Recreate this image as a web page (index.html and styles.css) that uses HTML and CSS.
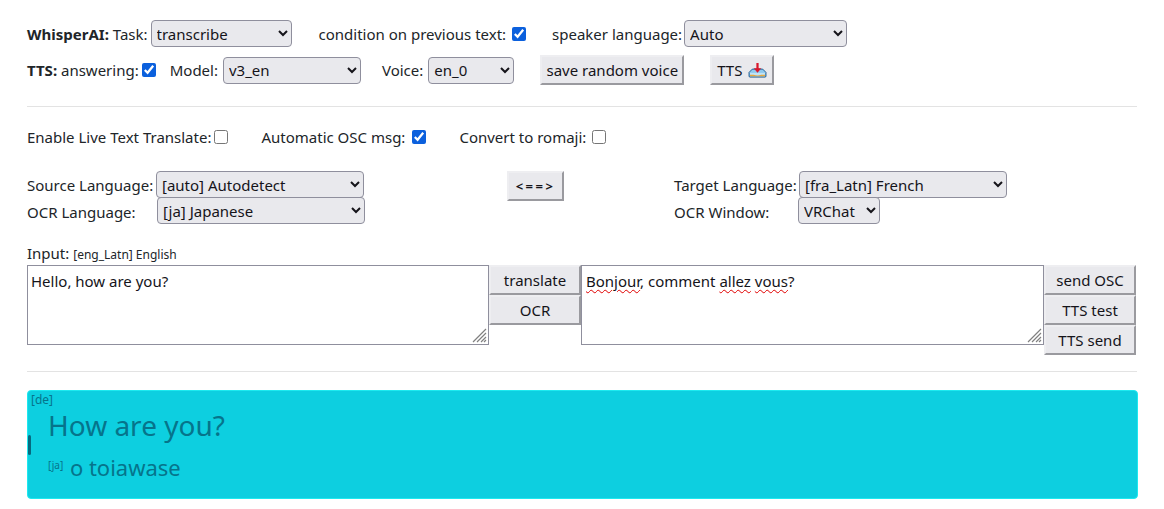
FILE: index.html
```html
<!doctype html>
<html lang="en">

<head>
	<meta charset="UTF-8">
	<title>Whispering Tiger</title>
	<link rel="stylesheet" href="styles.css">
</head>

<body>
	<div class="row row-whisper">
		<span class="field gap-3"><span><b>WhisperAI:</b> Task:</span>
			<select class="sel-task"><option>transcribe</option></select></span>
		<label class="field gap-6">condition on previous text: <input type="checkbox" checked></label>
		<span class="field gap-2">speaker language:
			<select class="sel-speaker"><option>Auto</option></select></span>
	</div>
	<div class="row row-tts">
		<label class="field gap-3"><span><b>TTS:</b> answering:</span> <input type="checkbox" checked></label>
		<span class="field gap-5 pull-model">Model:
			<select class="sel-model"><option>v3_en</option></select></span>
		<span class="field gap-5 pull-voice">Voice:
			<select class="sel-voice"><option>en_0</option></select></span>
		<button class="btn btn-save">save random voice</button>
		<button class="btn btn-tts">TTS
			<svg width="19" height="15" viewBox="0 0 20 16">
				<path d="M1 10 L4.5 6.5 H15.5 L19 10 V14 Q19 15 18 15 H2 Q1 15 1 14 Z" fill="#8fc9ee" stroke="#15548c"/>
				<path d="M2 10.5 H18 V14 H2 Z" fill="#bfe3f7"/>
				<path d="M2 12.5 H6 Q10 14 14 12.5 H18 V14.2 H2 Z" fill="#e8a83e"/>
				<path d="M8.8 0 H11.2 V5.5 H14 L10 10.5 L6 5.5 H8.8 Z" fill="#d9182d"/>
			</svg>
		</button>
	</div>
	<hr class="rule rule-top">

	<div class="row row-options">
		<label class="field gap-3">Enable Live Text Translate: <input type="checkbox"></label>
		<label class="field gap-7">Automatic OSC msg: <input type="checkbox" checked></label>
		<label class="field gap-6">Convert to romaji: <input type="checkbox"></label>
	</div>

	<div class="lang-grid">
		<div>
			<div class="lang-row"><span class="lang-label">Source Language:</span>
				<select class="sel-lang"><option>[auto] Autodetect</option></select></div>
			<div class="lang-row"><span class="lang-label lang-label-ocr">OCR Language:</span>
				<select class="sel-lang"><option>[ja] Japanese</option></select></div>
		</div>
		<div><button class="btn btn-swap">&lt;==&gt;</button></div>
		<div>
			<div class="lang-row"><span class="lang-label lang-label-target">Target Language:</span>
				<select class="sel-lang"><option>[fra_Latn] French</option></select></div>
			<div class="lang-row"><span class="lang-label lang-label-window">OCR Window:</span>
				<select class="sel-window"><option>VRChat</option></select></div>
		</div>
	</div>

	<div class="input-label">Input: <small>[eng_Latn] English</small></div>
	<div class="translate">
		<div class="box-wrap">
			<textarea class="box">Hello, how are you?</textarea>
			<svg class="grip" width="15" height="15" viewBox="0 0 15 15">
				<path d="M14 1 L1 14 M14 5 L5 14 M14 9 L9 14 M14 12 L12 14" stroke="#808080" stroke-width="1.2"/>
			</svg>
		</div>
		<div class="btn-stack">
			<button class="btn btn-side">translate</button>
			<button class="btn btn-side">OCR</button>
		</div>
		<div class="box-wrap">
			<div class="box box-output"><span class="typo">Bonjour</span>, comment <span class="typo">allez</span> <span class="typo">vous</span>?</div>
			<svg class="grip" width="15" height="15" viewBox="0 0 15 15">
				<path d="M14 1 L1 14 M14 5 L5 14 M14 9 L9 14 M14 12 L12 14" stroke="#808080" stroke-width="1.2"/>
			</svg>
		</div>
		<div class="btn-stack">
			<button class="btn btn-side">send OSC</button>
			<button class="btn btn-side">TTS test</button>
			<button class="btn btn-side">TTS send</button>
		</div>
	</div>
	<hr class="rule rule-bottom">

	<div class="subtitle">
		<span class="sub-lang">[de]</span>
		<span class="sub-handle"></span>
		<div class="sub-main">How are you?</div>
		<div class="sub-second"><small>[ja]</small> o toiawase</div>
	</div>
</body>

</html>
```

FILE: styles.css
```css
body {
	margin: 0;
	padding: 20px 27px 0;
	font: 15px/24px "Noto Sans", sans-serif;
	color: #212529;
	background: #fff;
	overflow: hidden;
}

select,
button,
textarea,
.box {
	font: 15px/20px "Noto Sans", sans-serif;
	color: #15141a;
}

select {
	height: 27px;
	padding: 0 0 0 1px;
	background-color: #e9e9ed;
	border: 1px solid #8f8f9d;
	border-radius: 4px;
}

input[type="checkbox"] {
	width: 14px;
	height: 14px;
	margin: 0;
	accent-color: #0b60dd;
}

.row {
	display: flex;
	align-items: center;
}

.row-whisper {
	gap: 26px;
	height: 27px;
}

.row-tts {
	gap: 26px;
	height: 30px;
	margin-top: 8px;
}

.row-options {
	gap: 33px;
	height: 24px;
}

.field {
	display: flex;
	align-items: center;
	white-space: nowrap;
}

.gap-2 { gap: 2px; }
.gap-3 { gap: 3px; }
.gap-5 { gap: 5px; }
.gap-6 { gap: 6px; }
.gap-7 { gap: 7px; }

.pull-model { margin-left: -12px; }
.pull-voice { margin-left: -5px; }

.sel-task { width: 141px; margin-right: 1px; }
.sel-speaker { width: 163px; }
.sel-model { width: 138px; }
.sel-voice { width: 86px; }
.sel-lang { width: 208px; }
.sel-window { width: 82px; }

.btn {
	height: 30px;
	padding: 0;
	background: #e9e9ed;
	border: 2px solid;
	border-color: #eeeef1 #9a9a9f #9a9a9f #eeeef1;
	white-space: nowrap;
}

.btn-save { width: 144px; }

.btn-tts {
	display: flex;
	align-items: center;
	justify-content: center;
	gap: 6px;
	width: 64px;
}

.btn-swap {
	width: 57px;
	font-size: 13px;
	font-weight: bold;
	letter-spacing: 2.5px;
}

.btn-side {
	display: block;
	width: 92px;
}

.rule {
	height: 1px;
	margin: 0;
	border: 0;
	background: #e3e3e3;
}

.rule-top { margin: 21px 0 18px; }
.rule-bottom { margin-top: 16px; }

.lang-grid {
	display: grid;
	grid-template-columns: 480px 167px 1fr;
	margin-top: 22px;
}

.lang-row {
	display: flex;
	align-items: flex-start;
	height: 26px;
}

.lang-label {
	width: 129px;
	line-height: 29px;
	white-space: nowrap;
}

.lang-label-ocr { width: 130px; line-height: 31px; }
.lang-label-target { width: 125px; }
.lang-label-window { width: 124px; line-height: 31px; }

.input-label {
	height: 24px;
	margin-top: 18px;
}

.input-label small {
	font-size: 12px;
}

.translate {
	display: flex;
	align-items: flex-start;
}

.box-wrap {
	position: relative;
}

.box {
	display: block;
	box-sizing: border-box;
	width: 462px;
	height: 80px;
	margin: 0;
	padding: 5px 3px;
	background: #fff;
	border: 1px solid #8f8f9d;
	resize: none;
	overflow: auto;
	outline: none;
}

.box-output {
	width: 463px;
	padding-left: 4px;
}

.grip {
	position: absolute;
	right: 2px;
	bottom: 2px;
	pointer-events: none;
}

.typo {
	text-decoration: underline wavy #e00000 1px;
	text-underline-offset: 2px;
}

.subtitle {
	position: relative;
	box-sizing: border-box;
	height: 109px;
	margin: 18px -1px 0 0;
	padding: 17px 20px 0;
	color: #06748b;
	background: #0dcfe0;
	border: 1px solid #1de9ef;
	border-radius: 4px;
}

.sub-lang {
	position: absolute;
	top: 0;
	left: 3px;
	font-size: 12px;
	line-height: 18px;
}

.sub-handle {
	position: absolute;
	top: 44px;
	left: 0;
	width: 3px;
	height: 20px;
	background: #06697f;
	border-radius: 2px;
}

.sub-main {
	font-size: 28px;
	line-height: 34px;
}

.sub-second {
	margin-top: 10px;
	font-size: 22px;
	line-height: 30px;
}

.sub-second small {
	position: relative;
	top: -7px;
	margin-right: 1px;
	font-size: 10px;
}
```
